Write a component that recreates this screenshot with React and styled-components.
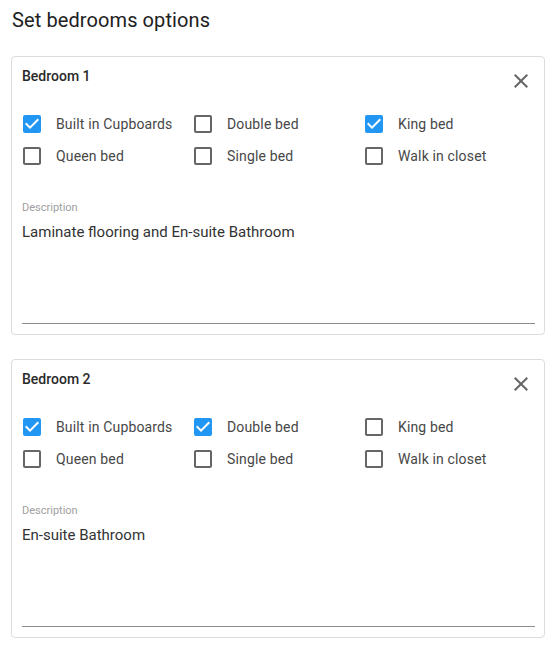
import React from 'react';
import styled, { createGlobalStyle } from 'styled-components';

const GlobalStyle = createGlobalStyle`
  body {
    margin: 0;
    background: #fff;
    font-family: Roboto, "Liberation Sans", sans-serif;
  }
`;

const bedrooms = [
  {
    name: 'Bedroom 1',
    options: { 'Built in Cupboards': true, 'Double bed': false, 'King bed': true, 'Queen bed': false, 'Single bed': false, 'Walk in closet': false },
    description: 'Laminate flooring and En-suite Bathroom',
  },
  {
    name: 'Bedroom 2',
    options: { 'Built in Cupboards': true, 'Double bed': true, 'King bed': false, 'Queen bed': false, 'Single bed': false, 'Walk in closet': false },
    description: 'En-suite Bathroom',
  },
];

const Page = styled.div`
  padding: 8px 12px 14px 11px;
  display: flex;
  flex-direction: column;
  gap: 24px;
`;

const Title = styled.h1`
  margin: 0;
  padding-left: 1px;
  font-size: 20px;
  line-height: 24px;
  font-weight: 400;
  letter-spacing: 0.1px;
  color: #212121;
`;

const Card = styled.div`
  border: 1px solid #dcdcdc;
  border-radius: 4px;
  padding: 11px 9px 10px 10px;
  display: flex;
  flex-direction: column;
`;

const Header = styled.div`
  display: flex;
  justify-content: space-between;
  align-items: flex-start;
  height: 40px;
`;

const CardTitle = styled.div`
  font-size: 14px;
  line-height: 17px;
  font-weight: 500;
  color: #2a2a2a;
`;

const CloseButton = styled.button`
  border: none;
  background: none;
  padding: 0;
  margin: 1px 2px 0 0;
  width: 24px;
  height: 24px;
  color: #666;
  cursor: pointer;
  svg { display: block; }
`;

const OptionGrid = styled.div`
  display: grid;
  grid-template-columns: repeat(3, 171px);
  grid-auto-rows: 32px;
`;

const Option = styled.label`
  display: flex;
  align-items: center;
  gap: 12px;
  font-size: 14px;
  letter-spacing: 0.15px;
  color: #474747;
  cursor: pointer;
  svg {
    display: block;
    margin-left: -2px;
    color: ${({ $checked }) => ($checked ? '#2196f3' : '#666')};
  }
`;

const Field = styled.div`
  margin-top: 29px;
  display: flex;
  flex-direction: column;
  border-bottom: 1px solid #8c8c8c;
  height: 122px;
`;

const FieldLabel = styled.span`
  font-size: 11px;
  line-height: 14px;
  color: #a0a0a0;
`;

const FieldValue = styled.div`
  margin-top: 7px;
  font-size: 15px;
  line-height: 20px;
  color: #333;
`;

const CheckIcon = ({ checked }) => (
  <svg width="24" height="24" viewBox="0 0 24 24">
    {checked ? (
      <>
        <rect x="3" y="3" width="18" height="18" rx="2" fill="currentColor" />
        <path d="M10 17l-5-5 1.41-1.41L10 14.17l7.59-7.59L19 8z" fill="#fff" />
      </>
    ) : (
      <path
        fill="currentColor"
        d="M19 5v14H5V5h14m0-2H5c-1.1 0-2 .9-2 2v14c0 1.1.9 2 2 2h14c1.1 0 2-.9 2-2V5c0-1.1-.9-2-2-2z"
      />
    )}
  </svg>
);

const CloseIcon = () => (
  <svg width="24" height="24" viewBox="0 0 24 24">
    <path
      fill="currentColor"
      d="M19 6.41 17.59 5 12 10.59 6.41 5 5 6.41 10.59 12 5 17.59 6.41 19 12 13.41 17.59 19 19 17.59 13.41 12z"
    />
  </svg>
);

const BedroomCard = ({ bedroom }) => (
  <Card>
    <Header>
      <CardTitle>{bedroom.name}</CardTitle>
      <CloseButton aria-label="Remove">
        <CloseIcon />
      </CloseButton>
    </Header>
    <OptionGrid>
      {Object.entries(bedroom.options).map(([name, checked]) => (
        <Option key={name} $checked={checked}>
          <CheckIcon checked={checked} />
          {name}
        </Option>
      ))}
    </OptionGrid>
    <Field>
      <FieldLabel>Description</FieldLabel>
      <FieldValue>{bedroom.description}</FieldValue>
    </Field>
  </Card>
);

const App = () => (
  <>
    <GlobalStyle />
    <Page>
      <Title>Set bedrooms options</Title>
      {bedrooms.map((b) => (
        <BedroomCard key={b.name} bedroom={b} />
      ))}
    </Page>
  </>
);

export default App;
